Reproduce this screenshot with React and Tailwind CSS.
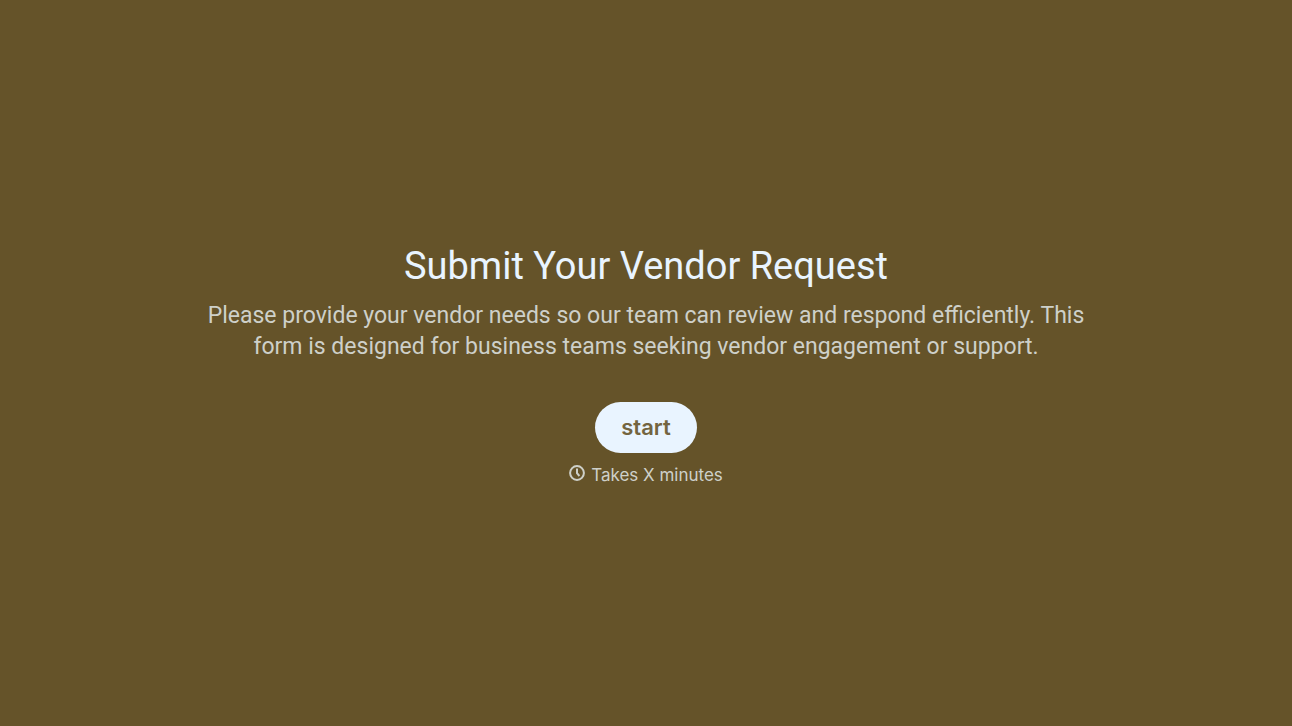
export default function App() {
  return (
    <main className="flex min-h-screen flex-col items-center justify-center bg-[#655329] px-6 pt-0.5 text-center font-['Inter',sans-serif]">
      <h1 className="font-['Roboto',sans-serif] text-[38px] leading-[52px] font-normal text-[#e9f4ff]">
        Submit Your Vendor Request
      </h1>
      <p className="mt-2 max-w-[920px] font-['Roboto',sans-serif] text-[23px] leading-[31px] text-[#ced0c9]">
        Please provide your vendor needs so our team can review and respond efficiently. This form is
        designed for business teams seeking vendor engagement or support.
      </p>
      <button
        type="button"
        className="mt-10 h-[51px] rounded-full bg-[#e9f4ff] px-[26px] text-[22px] leading-[30px] font-semibold text-[#736440]"
      >
        start
      </button>
      <div className="mt-2 flex items-center gap-1.5 text-[17px] leading-7 text-[#ced0c9]">
        <svg
          className="-mt-1 size-4"
          viewBox="0 0 16 16"
          fill="none"
          stroke="currentColor"
          strokeWidth="2"
          aria-hidden="true"
        >
          <circle cx="8" cy="8" r="6.9" />
          <path d="M8 3.6V8.2L10.4 11" />
        </svg>
        <span>Takes X minutes</span>
      </div>
    </main>
  );
}
